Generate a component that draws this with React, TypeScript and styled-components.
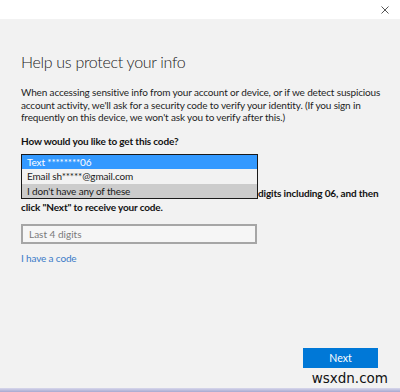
import React from "react";
import styled, { createGlobalStyle } from "styled-components";

const Global = createGlobalStyle`
  html, body { margin: 0; padding: 0; }
  body {
    background: #f2f2f2;
    font-family: Lato, "Noto Sans", Arial, sans-serif;
    color: #1a1a1a;
  }
`;

const Window = styled.div`
  width: 400px;
  height: 392px;
  display: flex;
  flex-direction: column;
  background: #f2f2f2;
  overflow: hidden;
`;

const TitleBar = styled.div`
  height: 19px;
  background: #ffffff;
  display: flex;
  justify-content: flex-end;
  align-items: center;
  padding-right: 11px;
  flex-shrink: 0;
`;

const CloseButton = styled.div`
  width: 8px;
  height: 8px;
  display: flex;
  align-items: center;
  justify-content: center;
`;

const Content = styled.div`
  flex: 1;
  padding: 33px 21px 0 21px;
  display: flex;
  flex-direction: column;
  font-size: 10px;
  letter-spacing: -0.15px;
`;

const Title = styled.h1`
  margin: 0;
  font-family: Lato, sans-serif;
  font-weight: 300;
  font-size: 16px;
  letter-spacing: -0.3px;
  line-height: 20px;
  color: #222;
  white-space: nowrap;
`;

const Intro = styled.p`
  margin: 14px 0 0 0;
  font-size: 10px;
  line-height: 12.6px;
  color: #1e1e1e;
  white-space: nowrap;
`;

const Label = styled.div`
  margin-top: 11px;
  font-size: 10px;
  line-height: 13px;
  font-weight: 700;
  color: #111;
`;

const SelectWrap = styled.div`
  position: relative;
  margin-top: 6px;
  width: 236px;
  height: 20px;
  border: 2px solid #999;
  box-sizing: border-box;
  background: #fff;
`;

const ListBox = styled.div`
  position: absolute;
  left: -2px;
  top: -2px;
  width: 237px;
  box-sizing: border-box;
  border: 1px solid #1a1a1a;
  background: #f2f2f2;
  display: flex;
  flex-direction: column;
  z-index: 2;
`;

const Option = styled.div<{ $state: "selected" | "normal" | "hover" }>`
  height: 14.5px;
  line-height: 14.5px;
  padding-left: 5px;
  font-size: 10px;
  color: ${(p) => (p.$state === "selected" ? "#ffffff" : "#1a1a1a")};
  background: ${(p) =>
    p.$state === "selected" ? "#3399ff" : p.$state === "hover" ? "#cccccc" : "#f2f2f2"};
`;

const Instruction = styled.p`
  margin: 12px 0 0 0;
  font-size: 10px;
  line-height: 14px;
  font-weight: 700;
  color: #111;
  white-space: nowrap;
  text-indent: 237px;
`;

const Input = styled.input`
  margin-top: 10px;
  width: 236px;
  height: 20px;
  box-sizing: border-box;
  border: 2px solid #a6a6a6;
  background: #f6f6f6;
  padding: 0 6px;
  font-family: Lato, sans-serif;
  font-size: 10px;
  color: #222;
  outline: none;
  &::placeholder { color: #7a7a7a; }
`;

const Link = styled.a`
  margin-top: 8px;
  font-size: 10px;
  line-height: 13px;
  color: #3a7bc8;
  text-decoration: none;
  align-self: flex-start;
`;

const Footer = styled.div`
  display: flex;
  justify-content: flex-end;
  padding: 0 22px 0 0;
`;

const NextButton = styled.button`
  width: 75px;
  height: 20px;
  border: none;
  background: #0078d7;
  color: #fff;
  font-family: Lato, sans-serif;
  font-size: 10.5px;
  padding: 0;
`;

const Watermark = styled.div`
  display: flex;
  justify-content: flex-end;
  padding: 3px 12px 0 0;
  font-family: "DejaVu Sans", sans-serif;
  font-size: 13.5px;
  line-height: 15px;
  color: #111;
  height: 17px;
`;

const BottomEdge = styled.div`
  height: 4px;
  background: linear-gradient(#d8d8ec, #a8a8d0);
  flex-shrink: 0;
`;

export default function App() {
  return (
    <>
      <Global />
      <Window>
        <TitleBar>
          <CloseButton>
            <svg width="8" height="8" viewBox="0 0 8 8">
              <path d="M0.5 0.5 L7.5 7.5 M7.5 0.5 L0.5 7.5" stroke="#555" strokeWidth="1" />
            </svg>
          </CloseButton>
        </TitleBar>
        <Content>
          <Title>Help us protect your info</Title>
          <Intro>
            When accessing sensitive info from your account or device, or if we detect suspicious
            <br />
            account activity, we'll ask for a security code to verify your identity. (If you sign in
            <br />
            frequently on this device, we won't ask you to verify after this.)
          </Intro>
          <Label>How would you like to get this code?</Label>
          <SelectWrap>
            <ListBox>
              <Option $state="selected">Text ********06</Option>
              <Option $state="normal">Email sh*****@gmail.com</Option>
              <Option $state="hover">I don't have any of these</Option>
            </ListBox>
          </SelectWrap>
          <Instruction>
            digits including 06, and then
            <br />
            click "Next" to receive your code.
          </Instruction>
          <Input placeholder="Last 4 digits" />
          <Link href="#">I have a code</Link>
        </Content>
        <Footer>
          <NextButton>Next</NextButton>
        </Footer>
        <Watermark>wsxdn.com</Watermark>
        <BottomEdge />
      </Window>
    </>
  );
}
